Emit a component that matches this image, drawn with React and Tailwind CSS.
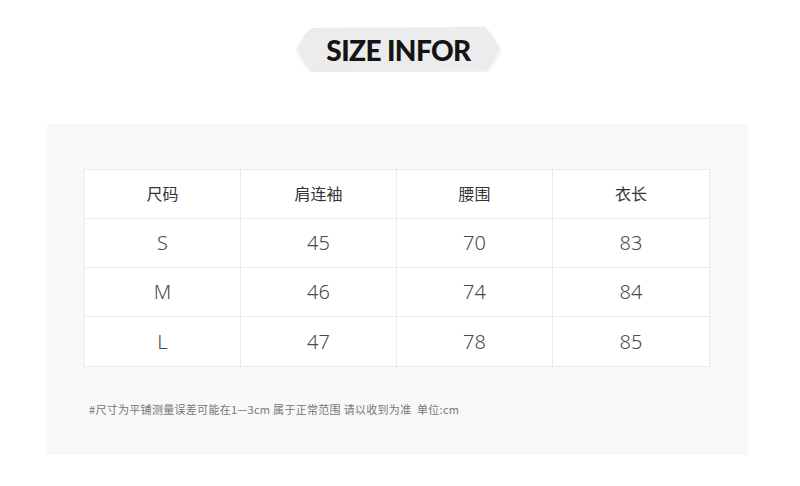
const rows = [
  ["S", "45", "70", "83"],
  ["M", "46", "74", "84"],
  ["L", "47", "78", "85"],
];
const heads = ["尺码", "肩连袖", "腰围", "衣长"];

export default function App() {
  return (
    <div className="w-[800px] h-[486px] bg-white flex flex-col items-center font-['Noto_Sans','Noto_Sans_CJK_SC',sans-serif]">
      <div className="mt-[26px] ml-[-3px] relative w-[206px] h-[46px] flex items-center justify-center">
        <svg className="absolute inset-0" width="206" height="46" viewBox="0 0 206 46">
          <defs>
            <filter id="sh" x="-10%" y="-20%" width="120%" height="150%">
              <feDropShadow dx="0" dy="1.5" stdDeviation="1.5" floodColor="#000" floodOpacity="0.12" />
            </filter>
          </defs>
          <path
            d="M16 2 L189 1 L196 9 L204 23 L197 36 L190 44 L16 45 L9 37 L1 23 L8 10 Z"
            fill="#ececec"
            filter="url(#sh)"
          />
        </svg>
        <span className="relative font-['Lato',sans-serif] font-black text-[28px] leading-none tracking-[-0.6px] text-[#141414] mt-[2px]">
          SIZE INFOR
        </span>
      </div>
      <div className="mt-[52px] w-[701px] h-[331px] bg-[#f8f8f8] ml-[-5px] pt-[45px] px-[37px]">
        <div className="w-[626px] border border-[#ececec] bg-white grid grid-cols-4">
          {heads.map((h, i) => (
            <div
              key={h}
              className={`h-[49px] flex items-center justify-center text-[16px] text-[#333] border-b border-[#ececec] ${i < 3 ? "border-r" : ""}`}
            >
              {h}
            </div>
          ))}
          {rows.map((r, ri) =>
            r.map((c, ci) => (
              <div
                key={ri + "-" + ci}
                className={`h-[49px] flex items-center justify-center text-[20px] font-light text-[#4a4a4a] border-[#ececec] ${ci < 3 ? "border-r" : ""} ${ri < 2 ? "border-b" : ""}`}
              >
                {c}
              </div>
            ))
          )}
        </div>
        <div className="mt-[34px] ml-[5px] text-[11px] text-[#777] font-['Noto_Sans_CJK_SC',sans-serif] tracking-[0.3px] whitespace-pre">
          #尺寸为平铺测量误差可能在1—3cm 属于正常范围 请以收到为准  单位:cm
        </div>
      </div>
    </div>
  );
}
